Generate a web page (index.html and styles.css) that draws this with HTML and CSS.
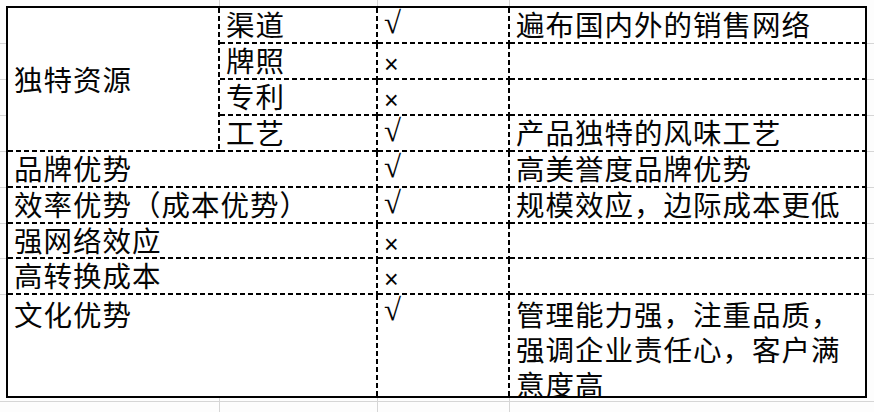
FILE: index.html
```html
<!DOCTYPE html>
<html lang="zh">
<head>
<meta charset="utf-8">
<title>独特资源</title>
<link rel="stylesheet" href="styles.css">
</head>
<body>
<div class="sheet">
  <div class="c mid rb tall">独特资源</div>
  <div class="c rb">渠道</div>
  <div class="c mark rb">√</div>
  <div class="c b">遍布国内外的销售网络</div>

  <div class="c rb">牌照</div>
  <div class="c mark x rb">×</div>
  <div class="c b"></div>

  <div class="c rb">专利</div>
  <div class="c mark x rb">×</div>
  <div class="c b"></div>

  <div class="c rb">工艺</div>
  <div class="c mark rb">√</div>
  <div class="c b">产品独特的风味工艺</div>

  <div class="c wide rb">品牌优势</div>
  <div class="c mark rb">√</div>
  <div class="c b">高美誉度品牌优势</div>

  <div class="c wide rb">效率优势（成本优势）</div>
  <div class="c mark rb">√</div>
  <div class="c b">规模效应，边际成本更低</div>

  <div class="c wide rb">强网络效应</div>
  <div class="c mark x rb">×</div>
  <div class="c b"></div>

  <div class="c wide rb">高转换成本</div>
  <div class="c mark x rb">×</div>
  <div class="c b"></div>

  <div class="c wide last r">文化优势</div>
  <div class="c mark last r">√</div>
  <div class="c last clip">管理能力强，注重品质，<br>强调企业责任心，客户满<br>意度高</div>
</div>
</body>
</html>
```

FILE: styles.css
```css
html, body {
  margin: 0;
  padding: 0;
}

body {
  width: 874px;
  height: 412px;
  overflow: hidden;
  background-color: #fdfdfd;
  background-image:
    linear-gradient(to right, transparent 219px, #d6d6d6 219px, #d6d6d6 220px, transparent 220px),
    linear-gradient(to right, transparent 377px, #d6d6d6 377px, #d6d6d6 378px, transparent 378px),
    linear-gradient(to right, transparent 509px, #d6d6d6 509px, #d6d6d6 510px, transparent 510px),
    linear-gradient(to bottom, transparent 43px, #d6d6d6 43px, #d6d6d6 44px, transparent 44px),
    linear-gradient(to bottom, transparent 79px, #d6d6d6 79px, #d6d6d6 80px, transparent 80px),
    linear-gradient(to bottom, transparent 115px, #d6d6d6 115px, #d6d6d6 116px, transparent 116px),
    linear-gradient(to bottom, transparent 151px, #d6d6d6 151px, #d6d6d6 152px, transparent 152px),
    linear-gradient(to bottom, transparent 187px, #d6d6d6 187px, #d6d6d6 188px, transparent 188px),
    linear-gradient(to bottom, transparent 223px, #d6d6d6 223px, #d6d6d6 224px, transparent 224px),
    linear-gradient(to bottom, transparent 258px, #d6d6d6 258px, #d6d6d6 259px, transparent 259px),
    linear-gradient(to bottom, transparent 294px, #d6d6d6 294px, #d6d6d6 295px, transparent 295px),
    linear-gradient(to bottom, transparent 401px, #d6d6d6 401px, #d6d6d6 402px, transparent 402px);
  font-family: "Noto Sans CJK SC", "Noto Sans", sans-serif;
  color: #050505;
}

.sheet {
  margin: 6px 0 0 6px;
  width: 857px;
  height: 388px;
  border: 2px solid #000;
  background: #fff;
  display: grid;
  grid-template-columns: 212px 158px 132px 355px;
  grid-template-rows: 36px 36px 36px 36px 36px 36px 35px 36px 1fr;
}

.c {
  font-size: 28.5px;
  line-height: 28px;
  letter-spacing: 1px;
  padding: 2px 0 0 6px;
  white-space: nowrap;
  box-sizing: border-box;
  background-repeat: no-repeat;
}

.tall {
  grid-row: span 4;
}

.wide {
  grid-column: span 2;
}

.mid {
  display: flex;
  align-items: center;
  padding-top: 0;
  padding-bottom: 2px;
}

.mark {
  font-family: "Liberation Serif", "DejaVu Serif", serif;
  font-size: 31px;
  padding-left: 6px;
  padding-top: 1px;
}

.mark.x {
  font-family: "Liberation Sans", "DejaVu Sans", sans-serif;
  font-size: 25px;
  padding-top: 6px;
}

.last {
  line-height: 35px;
  padding-top: 1px;
  white-space: normal;
}

.clip {
  overflow: hidden;
}

.mark.last {
  padding-top: 1px;
  line-height: 28px;
}

/* dashed right edge */
.r {
  background-image: linear-gradient(to bottom, #000 5px, transparent 5px);
  background-size: 2px 8px;
  background-position: right top;
  background-repeat: repeat-y;
}

/* dashed bottom edge */
.b {
  background-image: linear-gradient(to right, #000 5px, transparent 5px);
  background-size: 8px 2px;
  background-position: left bottom;
  background-repeat: repeat-x;
}

/* both edges */
.rb {
  background-image:
    linear-gradient(to bottom, #000 5px, transparent 5px),
    linear-gradient(to right, #000 5px, transparent 5px);
  background-size: 2px 8px, 8px 2px;
  background-position: right top, left bottom;
  background-repeat: repeat-y, repeat-x;
}
```
